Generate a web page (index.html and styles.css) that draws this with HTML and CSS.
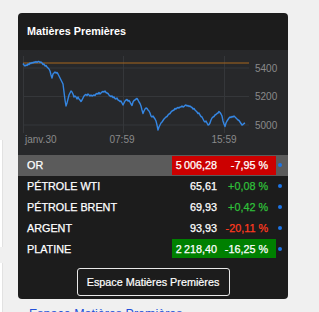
FILE: index.html
```html
<!DOCTYPE html>
<html>
<head>
	<title>Matières Premières</title>
	<link rel="stylesheet" href="styles.css">
</head>
<body>
<div class="page">
	<div class="side">
		<div class="side-box side-box-1"></div>
		<div class="side-box side-box-2"></div>
	</div>
	<div class="main">
		<div class="card">
			<div class="card-head">Matières Premières</div>
			<div class="chart">
				<svg width="270" height="105" viewBox="18 50 270 105">
					<g stroke="#35373a" stroke-width="1">
						<line x1="23" y1="68" x2="249" y2="68"/>
						<line x1="23" y1="96.5" x2="249" y2="96.5"/>
						<line x1="23" y1="125" x2="249" y2="125"/>
						<line x1="23.5" y1="56" x2="23.5" y2="133"/>
						<line x1="123.5" y1="56" x2="123.5" y2="133"/>
						<line x1="224.5" y1="56" x2="224.5" y2="133"/>
					</g>
					<line x1="23" y1="63" x2="249" y2="63" stroke="#a8671d" stroke-width="1.2"/>
					<polyline fill="none" stroke="#3586e2" stroke-width="1.4" stroke-linejoin="round" points="23,63.5 24,65 25,66 26,65 27,65.5 28,64 29,64.5 30,63 31,63.5 32,62.5 33,63 34,62 35,62.5 36,61.5 37,62.5 38,61.5 39,61.5 40,62.5 41,62 42,63 43,64.5 44,64 45,66 46,65.5 47,67 48,68 49,69 50,71 51,75 52,78 53,74 54,73 55,72 56,73 57,72.5 58,74 59,76 60,78 61,80 62,82 63,84 64,92 65,100 66,106 67,103 68,99 69,95 70,93 71,91 72,92 73,94 74,97 75,96 76,97 77,99 78,97 79,99 80,100 81,101.5 82,100 83,98 84,96 85,95 86,94.5 87,95.5 88,94 89,95 90,96 91,95 92,96 93,95.5 94,95 95,95.5 96,94 97,93.5 98,94 99,92.5 100,94 101,93 102,92 103,91.5 104,92 105,91 106,92.5 107,93 108,93.5 109,95 110,96 111,96.5 112,96 113,97.5 114,97 115,98.5 116,99 117,98 118,100 119,100.5 120,101.5 121,101 122,103 123,105 124,103 125,101 126,100 127,99.5 128,101 129,100.5 130,102 131,104 132,105.5 133,102 134,100.5 135,100 136,99 137,98.5 138,100 139,102 140,103.5 141,106 142,110 143,113.5 144,111 145,109 146,108 147,108.5 148,110 149,111 150,113 151,116 152,117 153,116 154,117.5 155,119 156,121 157,125 158,130 159,127 160,125 161,123 162,122 163,120.5 164,119 165,118 166,117 167,116.5 168,115 169,114 170,113.5 171,112 172,111 173,110.5 174,110 175,108.5 176,109 177,108 178,107.5 179,108 180,107 181,107 182,106 183,107 184,106.5 185,105.5 186,105 187,106 188,105.5 189,106.5 190,106 191,107 192,107.5 193,109 194,108.5 195,110 196,111 197,112 198,113.5 199,113 200,115 201,116.5 202,117 203,119 204,121 205,122 206,121 207,123 208,125 209,124.5 210,123 211,120 212,118 213,117 214,116.5 215,115 216,114.5 217,113.5 218,113 219,111.5 220,112.5 221,114 222,116 223,121 224,124 225,126.5 226,123 227,121 228,119.5 229,118 230,117 231,117.5 232,116.5 233,117 234,116 235,117 236,118 237,119 238,120 239,120.5 240,122 241,123.5 242,125 243,124.5 244,123.5 245,123"/>
					<g class="axis">
						<text x="255" y="71.5">5400</text>
						<text x="255" y="100">5200</text>
						<text x="255" y="128.5">5000</text>
						<text x="25" y="142.5">janv.30</text>
						<text x="122" y="142.5" text-anchor="middle">07:59</text>
						<text x="224" y="142.5" text-anchor="middle">15:59</text>
					</g>
				</svg>
			</div>
			<ul class="quotes">
				<li class="quote active">
					<span class="name">OR</span>
					<span class="vals down-box"><span class="price">5&#8239;006,28</span><span class="change">-7,95 %</span></span>
					<span class="dot"></span>
				</li>
				<li class="quote">
					<span class="name">PÉTROLE WTI</span>
					<span class="vals"><span class="price">65,61</span><span class="change up">+0,08 %</span></span>
					<span class="dot"></span>
				</li>
				<li class="quote">
					<span class="name">PÉTROLE BRENT</span>
					<span class="vals"><span class="price">69,93</span><span class="change up">+0,42 %</span></span>
					<span class="dot"></span>
				</li>
				<li class="quote">
					<span class="name">ARGENT</span>
					<span class="vals"><span class="price">93,93</span><span class="change down">-20,11 %</span></span>
					<span class="dot"></span>
				</li>
				<li class="quote">
					<span class="name">PLATINE</span>
					<span class="vals up-box"><span class="price">2&#8239;218,40</span><span class="change">-16,25 %</span></span>
					<span class="dot"></span>
				</li>
			</ul>
			<div class="card-foot">
				<a class="btn" href="#">Espace Matières Premières</a>
			</div>
		</div>
		<a class="more" href="#">Espace Matières Premières</a>
	</div>
</div>
</body>
</html>
```

FILE: styles.css
```css
*{
	padding: 0;
	margin: 0;
	list-style: none;
	text-decoration: none;
	box-sizing: border-box;
}
body{
	background: #f0f0f0;
	font-family: "Liberation Sans", Arial, sans-serif;
	overflow: hidden;
}
.page{
	display: flex;
}
.side{
	width: 3px;
}
.side-box{
	background: #fff;
	border-right: 1px solid #e2e2e2;
}
.side-box-1{
	margin-top: 140px;
	height: 107px;
}
.side-box-2{
	margin-top: 16px;
	height: 60px;
}
.main{
	margin-left: 15px;
	padding-top: 13px;
}
.card{
	width: 270px;
	background: #1c1c1c;
	border-radius: 4px;
	overflow: hidden;
	padding-bottom: 3px;
}
.card-head{
	height: 37px;
	line-height: 37px;
	padding-left: 9px;
	color: #fff;
	font-size: 10.8px;
	font-weight: bold;
}
.chart{
	height: 105px;
	background: #27282a;
}
.chart svg{
	display: block;
}
.axis text{
	fill: #8a8a8a;
	font-size: 10px;
	font-family: "Liberation Sans", Arial, sans-serif;
}
.quotes{
	color: #fff;
	font-size: 10.8px;
	-webkit-text-stroke: 0.25px currentColor;
}
.quote{
	display: flex;
	align-items: center;
	height: 20.8px;
	padding: 0 6.5px 0 9px;
}
.quote.active{
	background: #5b5b5b;
}
.name{
	flex: 1;
}
.vals{
	display: flex;
	align-items: center;
	width: 104px;
	height: 18.4px;
}
.price{
	width: 48px;
	padding-right: 3px;
	text-align: right;
}
.change{
	flex: 1;
	text-align: right;
	padding-right: 8px;
}
.up{
	color: #2fc03a;
}
.down{
	color: #ff3a1f;
}
.down-box{
	background: #cc0000;
}
.up-box{
	background: #008000;
}
.dot{
	width: 4px;
	height: 4px;
	margin-left: 1.5px;
	border-radius: 50%;
	background: #1c74e6;
}
.card-foot{
	display: flex;
	justify-content: center;
	padding-top: 9px;
}
.btn{
	display: block;
	width: 153px;
	height: 28px;
	line-height: 26px;
	border: 1px solid #e8e8e8;
	border-radius: 3px;
	color: #fff;
	font-size: 10.8px;
	text-align: center;
	-webkit-text-stroke: 0.2px currentColor;
}
.more{
	display: block;
	margin-top: 8px;
	padding-left: 11px;
	color: #2350d8;
	font-size: 12.5px;
}
```
